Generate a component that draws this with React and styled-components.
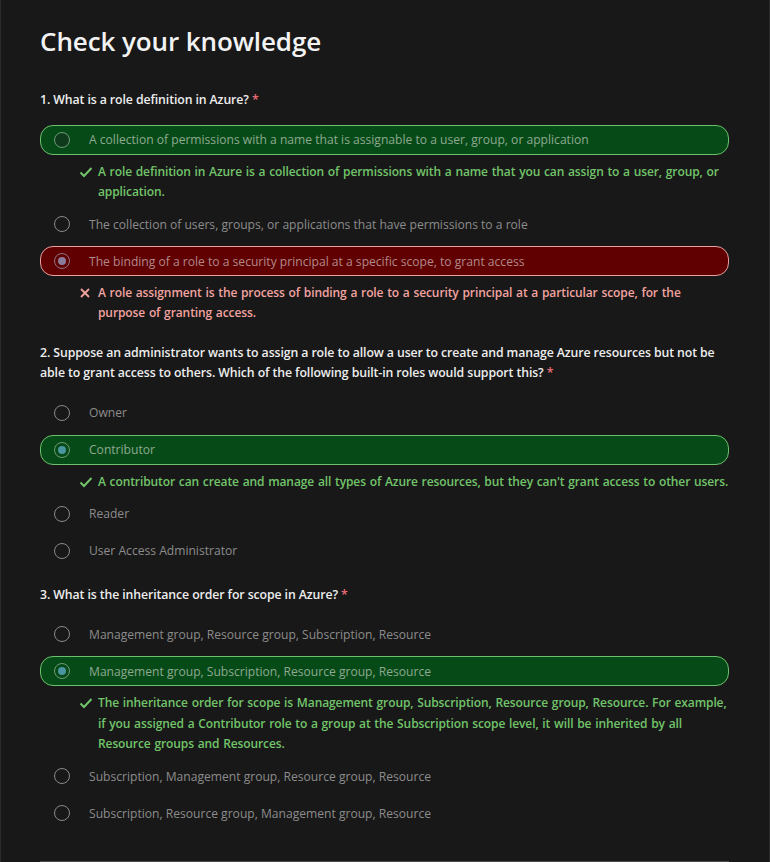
import React from "react";
import styled, { createGlobalStyle } from "styled-components";

const GlobalStyle = createGlobalStyle`
  body {
    margin: 0;
    background: #181818;
    font-family: "Open Sans", "Noto Sans", sans-serif;
  }
`;

const Page = styled.div`
  box-sizing: border-box;
  width: 770px;
  min-height: 862px;
  padding: 21px 40px 0 39px;
  background: #181818;
  border-left: 1px solid #2c2c2c;
  border-right: 1px solid #2c2c2c;
`;

const Title = styled.h1`
  margin: 0 0 29px;
  font-size: 26px;
  font-weight: 600;
  line-height: 40px;
  color: #f2f2f2;
  letter-spacing: -0.1px;
`;

const QuestionBlock = styled.div`
  display: flex;
  flex-direction: column;
  gap: 14px;
  margin-bottom: 19px;
`;

const Label = styled.div`
  font-size: 12.3px;
  font-weight: 600;
  line-height: 20.5px;
  color: #eeeeee;
  letter-spacing: -0.1px;
`;

const Required = styled.span`
  color: #f1707b;
`;

const Options = styled.div`
  display: flex;
  flex-direction: column;
  gap: 7px;
`;

const tones = {
  correct: { bg: "#064b17", border: "#6cbf6c" },
  wrong: { bg: "#600000", border: "#e8a0a0" },
};

const OptionRow = styled.div`
  box-sizing: border-box;
  height: 30px;
  display: flex;
  align-items: center;
  padding-left: 13px;
  border-radius: 13px;
  border: 1px solid ${(p) => (p.$tone ? tones[p.$tone].border : "transparent")};
  background: ${(p) => (p.$tone ? tones[p.$tone].bg : "transparent")};
`;

const Radio = styled.span`
  box-sizing: border-box;
  width: 16px;
  height: 16px;
  border-radius: 50%;
  border: 1.5px solid ${(p) =>
    p.$tone === "wrong" ? "#8f7386" : p.$tone === "correct" ? "#6f9a76" : "#8a8a8a"};
  background: ${(p) => (p.$tone === "correct" && !p.$checked ? "#0f3a1c" : "transparent")};
  display: flex;
  align-items: center;
  justify-content: center;
  flex-shrink: 0;

  &::after {
    content: "";
    display: ${(p) => (p.$checked ? "block" : "none")};
    width: 8px;
    height: 8px;
    border-radius: 50%;
    background: ${(p) => (p.$tone === "wrong" ? "#8a7d9c" : "#4a95a0")};
  }
`;

const OptionText = styled.span`
  margin-left: 19px;
  font-size: 12.1px;
  color: ${(p) =>
    p.$tone === "wrong" ? "#b0898b" : p.$tone === "correct" ? "#8ea891" : "#8c8c8c"};
  white-space: nowrap;
`;

const Feedback = styled.div`
  display: flex;
  align-items: flex-start;
  padding-left: 39px;
  font-size: 12px;
  font-weight: 600;
  line-height: 20.3px;
  letter-spacing: -0.1px;
  word-spacing: 0.75px;
  color: ${(p) => (p.$tone === "wrong" ? "#f3a3a0" : "#72c46a")};
`;

const IconBox = styled.span`
  width: 19px;
  height: 20px;
  display: flex;
  align-items: center;
  flex-shrink: 0;
`;

const Divider = styled.div`
  margin-top: 33px;
  height: 1px;
  background: #4a4a4a;
`;

const CheckIcon = () => (
  <svg width="14" height="12" viewBox="0 0 14 12">
    <path d="M1.5 6.5 L5 10 L12.5 2" fill="none" stroke="currentColor" strokeWidth="2" />
  </svg>
);

const CrossIcon = () => (
  <svg width="12" height="12" viewBox="0 0 12 12">
    <path d="M2 2 L10 10 M10 2 L2 10" fill="none" stroke="currentColor" strokeWidth="1.8" />
  </svg>
);

const questions = [
  {
    label: "1. What is a role definition in Azure?",
    options: [
      {
        text: "A collection of permissions with a name that is assignable to a user, group, or application",
        tone: "correct",
        feedback:
          "A role definition in Azure is a collection of permissions with a name that you can assign to a user, group, or application.",
      },
      { text: "The collection of users, groups, or applications that have permissions to a role" },
      {
        text: "The binding of a role to a security principal at a specific scope, to grant access",
        tone: "wrong",
        checked: true,
        feedback:
          "A role assignment is the process of binding a role to a security principal at a particular scope, for the purpose of granting access.",
      },
    ],
  },
  {
    label:
      "2. Suppose an administrator wants to assign a role to allow a user to create and manage Azure resources but not be able to grant access to others. Which of the following built-in roles would support this?",
    options: [
      { text: "Owner" },
      {
        text: "Contributor",
        tone: "correct",
        checked: true,
        feedback:
          "A contributor can create and manage all types of Azure resources, but they can't grant access to other users.",
      },
      { text: "Reader" },
      { text: "User Access Administrator" },
    ],
  },
  {
    label: "3. What is the inheritance order for scope in Azure?",
    options: [
      { text: "Management group, Resource group, Subscription, Resource" },
      {
        text: "Management group, Subscription, Resource group, Resource",
        tone: "correct",
        checked: true,
        feedback:
          "The inheritance order for scope is Management group, Subscription, Resource group, Resource. For example, if you assigned a Contributor role to a group at the Subscription scope level, it will be inherited by all Resource groups and Resources.",
      },
      { text: "Subscription, Management group, Resource group, Resource" },
      { text: "Subscription, Resource group, Management group, Resource" },
    ],
  },
];

const Question = ({ question }) => (
  <QuestionBlock>
    <Label>
      {question.label} <Required>*</Required>
    </Label>
    <Options>
      {question.options.map((opt) => (
        <React.Fragment key={opt.text}>
          <OptionRow $tone={opt.tone}>
            <Radio $tone={opt.tone} $checked={opt.checked} />
            <OptionText $tone={opt.tone}>{opt.text}</OptionText>
          </OptionRow>
          {opt.feedback && (
            <Feedback $tone={opt.tone}>
              <IconBox>{opt.tone === "wrong" ? <CrossIcon /> : <CheckIcon />}</IconBox>
              <span>{opt.feedback}</span>
            </Feedback>
          )}
        </React.Fragment>
      ))}
    </Options>
  </QuestionBlock>
);

const App = () => (
  <>
    <GlobalStyle />
    <Page>
      <Title>Check your knowledge</Title>
      {questions.map((q) => (
        <Question key={q.label} question={q} />
      ))}
      <Divider />
    </Page>
  </>
);

export default App;
